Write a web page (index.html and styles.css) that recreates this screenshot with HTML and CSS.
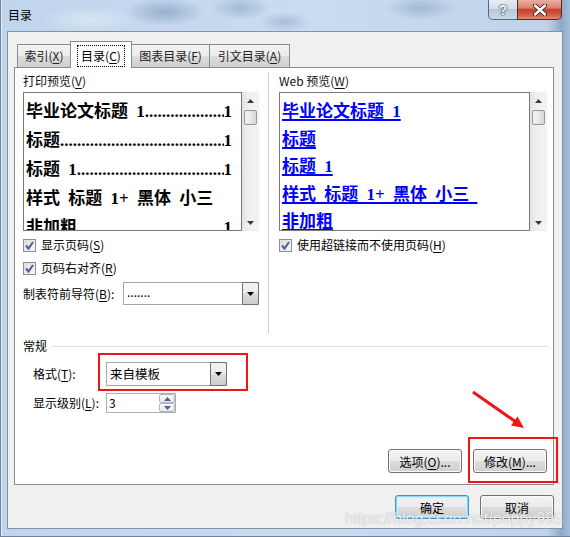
FILE: index.html
```html
<!DOCTYPE html>
<html lang="zh-CN">
<head>
    <meta charset="UTF-8">
    <meta name="viewport" content="width=device-width, initial-scale=1.0">
    <title>目录</title>
    <link rel="stylesheet" href="styles.css">
</head>
<body>
    <div class="window">
        <div class="titlebar">
            <span class="title">目录</span>
            <div class="caption-buttons">
                <span class="cap-btn help">?</span>
                <span class="cap-btn close">
                    <svg width="14" height="12" viewBox="0 0 14 12">
                        <path d="M2 1.5 L12 10.5 M12 1.5 L2 10.5" stroke="#3b1f1a" stroke-width="4.2" stroke-linecap="round"/>
                        <path d="M2 1.5 L12 10.5 M12 1.5 L2 10.5" stroke="#fff" stroke-width="2.4" stroke-linecap="round"/>
                    </svg>
                </span>
            </div>
        </div>

        <div class="client">
            <!-- abas do dialogo -->
            <div class="tabs">
                <div class="tab tab-index">索引(<u>X</u>)</div>
                <div class="tab tab-toc active"><span class="focus">目录(<u>C</u>)</span></div>
                <div class="tab tab-figures">图表目录(<u>F</u>)</div>
                <div class="tab tab-cites">引文目录(<u>A</u>)</div>
            </div>

            <div class="panel">
                <div class="columns">
                    <div class="col col-print">
                        <div class="caption">打印预览(<u>V</u>)</div>
                        <div class="preview">
                            <div class="preview-box print">
                                <div class="toc-line"><span class="entry">毕业论文标题 1</span><span class="leader">................................................................</span><span>1</span></div>
                                <div class="toc-line"><span class="entry">标题</span><span class="leader">................................................................</span><span>1</span></div>
                                <div class="toc-line"><span class="entry">标题 1</span><span class="leader">................................................................</span><span>1</span></div>
                                <div class="toc-line"><span class="entry">样式 标题 1+ 黑体 小三</span></div>
                                <div class="toc-line"><span class="entry">非加粗</span><span class="leader">................................................................</span><span>1</span></div>
                            </div>
                            <div class="scrollbar">
                                <div class="sb-arrow">
                                    <svg width="7" height="4" viewBox="0 0 7 4"><path d="M0 4 L3.5 0 L7 4 Z" fill="#3c3c3c"/></svg>
                                </div>
                                <div class="sb-thumb"></div>
                                <div class="sb-track"></div>
                                <div class="sb-arrow">
                                    <svg width="7" height="4" viewBox="0 0 7 4"><path d="M0 0 L7 0 L3.5 4 Z" fill="#3c3c3c"/></svg>
                                </div>
                            </div>
                        </div>
                        <div class="check"><span class="box"><svg width="11" height="11" viewBox="0 0 11 11"><path d="M2 5.5 L4.5 8.5 L9 2" fill="none" stroke="#4a5e9b" stroke-width="2"/></svg></span><span>显示页码(<u>S</u>)</span></div>
                        <div class="check"><span class="box"><svg width="11" height="11" viewBox="0 0 11 11"><path d="M2 5.5 L4.5 8.5 L9 2" fill="none" stroke="#4a5e9b" stroke-width="2"/></svg></span><span>页码右对齐(<u>R</u>)</span></div>
                        <div class="leader-row">
                            <span class="leader-label">制表符前导符(<u>B</u>):</span>
                            <div class="combo leader-combo">
                                <span class="combo-text">.......</span>
                                <span class="combo-drop"><svg width="7" height="4" viewBox="0 0 7 4"><path d="M0 0 L7 0 L3.5 4 Z" fill="#000"/></svg></span>
                            </div>
                        </div>
                    </div>

                    <div class="divider"></div>

                    <div class="col col-web">
                        <div class="caption">Web 预览(<u>W</u>)</div>
                        <div class="preview">
                            <div class="preview-box web">
                                <div class="web-line"><span>毕业论文标题 1</span></div>
                                <div class="web-line"><span>标题</span></div>
                                <div class="web-line"><span>标题 1</span></div>
                                <div class="web-line"><span>样式 标题 1+ 黑体 小三 </span></div>
                                <div class="web-line"><span>非加粗</span></div>
                            </div>
                            <div class="scrollbar">
                                <div class="sb-arrow">
                                    <svg width="7" height="4" viewBox="0 0 7 4"><path d="M0 4 L3.5 0 L7 4 Z" fill="#3c3c3c"/></svg>
                                </div>
                                <div class="sb-thumb"></div>
                                <div class="sb-track"></div>
                                <div class="sb-arrow">
                                    <svg width="7" height="4" viewBox="0 0 7 4"><path d="M0 0 L7 0 L3.5 4 Z" fill="#3c3c3c"/></svg>
                                </div>
                            </div>
                        </div>
                        <div class="check"><span class="box"><svg width="11" height="11" viewBox="0 0 11 11"><path d="M2 5.5 L4.5 8.5 L9 2" fill="none" stroke="#4a5e9b" stroke-width="2"/></svg></span><span>使用超链接而不使用页码(<u>H</u>)</span></div>
                    </div>
                </div>

                <div class="group-title"><span>常规</span><span class="rule"></span></div>

                <div class="field-row format-row">
                    <span class="field-label">格式(<u>T</u>):</span>
                    <div class="combo format-combo">
                        <span class="combo-text">来自模板</span>
                        <span class="combo-drop"><svg width="7" height="4" viewBox="0 0 7 4"><path d="M0 0 L7 0 L3.5 4 Z" fill="#000"/></svg></span>
                    </div>
                </div>

                <div class="field-row level-row">
                    <span class="field-label">显示级别(<u>L</u>):</span>
                    <div class="spin">
                        <span class="spin-text">3</span>
                        <span class="spin-buttons">
                            <span class="spin-btn"><svg width="7" height="4" viewBox="0 0 7 4"><path d="M0 4 L3.5 0 L7 4 Z" fill="#4f6289"/></svg></span>
                            <span class="spin-btn"><svg width="7" height="4" viewBox="0 0 7 4"><path d="M0 0 L7 0 L3.5 4 Z" fill="#4f6289"/></svg></span>
                        </span>
                    </div>
                </div>

                <div class="button-row panel-buttons">
                    <button class="btn">选项(<u>O</u>)...</button>
                    <button class="btn">修改(<u>M</u>)...</button>
                </div>
            </div>

            <div class="button-row dialog-buttons">
                <button class="btn default">确定</button>
                <button class="btn">取消</button>
            </div>
        </div>

        <!-- marcacoes em vermelho por cima do dialogo -->
        <div class="mark mark-format"></div>
        <div class="mark mark-modify"></div>
        <svg class="arrow" width="570" height="537" viewBox="0 0 570 537">
            <line x1="473" y1="392" x2="516" y2="422" stroke="#f01414" stroke-width="3"/>
            <polygon points="524,428 511,425.5 517.5,416.5" fill="#f01414"/>
        </svg>
        <div class="watermark">https://blog.csdn.net/poppy995</div>
    </div>
</body>
</html>
```

FILE: styles.css
```css
* {
    box-sizing: border-box;
}
body {
    margin: 0;
    font-family: "Noto Sans CJK SC", "Microsoft YaHei", sans-serif;
    font-size: 12px;
    line-height: 16px;
    color: #000;
    background-color: #c3d8ee;
    overflow: hidden;
}
u {
    text-decoration: underline;
    text-underline-offset: 2px;
}

/* moldura da janela (vidro aero) */
.window {
    position: relative;
    width: 570px;
    height: 537px;
    padding: 0 7px 8px 7px;
    display: flex;
    flex-direction: column;
    background:
        radial-gradient(ellipse 40px 14px at 165px 12px, rgba(95, 125, 165, 0.45), transparent),
        radial-gradient(ellipse 30px 12px at 240px 8px, rgba(95, 125, 165, 0.35), transparent),
        radial-gradient(ellipse 26px 10px at 285px 22px, rgba(95, 125, 165, 0.3), transparent),
        radial-gradient(ellipse 35px 12px at 420px 8px, rgba(95, 125, 165, 0.35), transparent),
        radial-gradient(ellipse 50px 14px at 90px 20px, rgba(255, 255, 255, 0.35), transparent),
        linear-gradient(90deg, #bfd5ec 0%, #c9dcf0 55%, #bed3ea 96%, #8ea9c9 98.5%, #a7bedb 100%);
    box-shadow: inset 1px 0 0 #6f839c, inset 0 -1px 0 #6f839c, inset 2px 0 0 rgba(255, 255, 255, 0.6);
}
.titlebar {
    height: 31px;
    display: flex;
    justify-content: space-between;
    align-items: flex-start;
}
.title {
    padding-top: 7px;
    margin-left: 1px;
}
.caption-buttons {
    display: flex;
    margin-right: 1px;
}
.cap-btn {
    height: 20px;
    display: flex;
    align-items: center;
    justify-content: center;
    border: 1px solid #56667b;
    border-top: none;
}
.help {
    width: 30px;
    border-radius: 0 0 0 5px;
    background: linear-gradient(#e6edf6, #d2dde9 45%, #b8c8da 50%, #c9d8e8);
    color: #fff;
    font-family: "Liberation Sans", sans-serif;
    font-weight: bold;
    font-size: 14px;
    text-shadow: 0 0 1px #2d3a4c, 0 0 1px #2d3a4c, 0 0 2px #2d3a4c;
}
.close {
    width: 45px;
    margin-left: -1px;
    border-color: #5a2a22;
    border-radius: 0 0 5px 0;
    background: linear-gradient(#eab0a2, #d9806c 42%, #c4432f 50%, #cf5a40 75%, #e28c70);
}

/* area cliente do dialogo */
.client {
    flex: 1;
    background-color: #f0f0f0;
    border: 1px solid #8393a7;
    padding: 9px 8px 9px 6px;
    display: flex;
    flex-direction: column;
}
.tabs {
    display: flex;
    align-items: flex-end;
    padding-left: 3px;
    height: 26px;
}
.tab {
    height: 23px;
    border: 1px solid #898c95;
    border-bottom: none;
    background: linear-gradient(#f3f3f3, #ebebeb 50%, #dddddd 50%, #cfcfcf);
    text-align: center;
    line-height: 21px;
    color: #222;
}
.tab + .tab {
    margin-left: -1px;
}
.tab-index { width: 54px; }
.tab-toc { width: 62px; }
.tab-figures { width: 79px; }
.tab-cites { width: 81px; }
.tab.active {
    position: relative;
    z-index: 1;
    height: 27px;
    margin-bottom: -1px;
    background: #fff;
    padding-top: 3px;
    color: #000;
}
.focus {
    display: inline-block;
    border: 1px dotted #000;
    padding: 1px 3px;
    line-height: 18px;
}

.panel {
    height: 418px;
    border: 1px solid #898c95;
    background-color: #fff;
    padding: 4px 6px 11px 8px;
    display: flex;
    flex-direction: column;
}
.columns {
    display: flex;
    height: 261px;
}
.col-print { width: 236px; }
.col-web { width: 268px; }
.divider {
    width: 1px;
    margin: 0 10px 0 9px;
    background-color: #c9cfd5;
}
.caption {
    margin-top: 1px;
    height: 16px;
    color: #111;
}

/* caixas de pre-visualizacao */
.preview {
    margin-top: 3px;
    height: 139px;
    display: flex;
}
.preview-box {
    flex: 1;
    border: 1px solid #7a7a7a;
    overflow: hidden;
    font-family: "Liberation Serif", "Noto Sans CJK SC", serif;
    font-weight: bold;
    font-size: 17px;
}
.print {
    padding: 4px 9px 0 2px;
}
.toc-line {
    display: flex;
    height: 29px;
    line-height: 29px;
}
.entry,
.web-line span {
    white-space: pre;
    word-spacing: 4px;
}
.leader {
    flex: 1;
    min-width: 0;
    overflow: hidden;
    white-space: nowrap;
}
.web {
    padding: 5px 2px 0 2px;
}
.web-line {
    height: 27.5px;
    line-height: 27.5px;
    white-space: nowrap;
}
.web-line span {
    color: #0000ff;
    text-decoration: underline;
    text-decoration-thickness: 2px;
    text-underline-offset: 2px;
}
.scrollbar {
    width: 17px;
    display: flex;
    flex-direction: column;
    background: linear-gradient(90deg, #e3e3e3, #f0f0f0 40%, #f3f3f3);
}
.sb-arrow {
    height: 17px;
    display: flex;
    align-items: center;
    justify-content: center;
}
.sb-thumb {
    margin: 1px 2px 0 2px;
    height: 15px;
    border: 1px solid #979797;
    border-radius: 2px;
    background: linear-gradient(90deg, #f4f4f4, #e8e8e8 50%, #d6d6d6);
}
.sb-track {
    flex: 1;
}

/* caixas de selecao */
.check {
    margin-top: 5px;
    height: 18px;
    display: flex;
    align-items: center;
    gap: 5px;
}
.box {
    width: 13px;
    height: 13px;
    border: 1px solid #8f8f8f;
    background: linear-gradient(135deg, #dcdcdc, #f6f6f6);
    display: flex;
    align-items: center;
    justify-content: center;
}
.box svg {
    display: block;
}

.leader-row {
    margin-top: 5px;
    height: 23px;
    display: flex;
    align-items: center;
}
.leader-label {
    width: 100px;
}

/* listas suspensas */
.combo {
    height: 100%;
    display: flex;
    border: 1px solid #a3a6ac;
    background-color: #fff;
}
.combo-text {
    flex: 1;
    padding-left: 3px;
    display: flex;
    align-items: center;
}
.combo-drop {
    width: 17px;
    margin: -1px -1px -1px 0;
    border: 1px solid #707070;
    border-radius: 0 2px 2px 0;
    background: linear-gradient(#f3f3f3, #ebebeb 50%, #dcdcdc 50%, #cdcdcd);
    display: flex;
    align-items: center;
    justify-content: center;
}
.leader-combo {
    width: 136px;
}
.leader-combo .combo-text {
    padding-bottom: 3px;
}

.group-title {
    margin-top: 5px;
    height: 16px;
    display: flex;
    align-items: center;
}
.rule {
    flex: 1;
    height: 1px;
    margin-left: 5px;
    background-color: #d5dfe5;
}

.field-row {
    display: flex;
    align-items: center;
    padding-left: 10px;
}
.field-label {
    width: 73px;
}
.format-row {
    margin-top: 8px;
    height: 24px;
}
.format-combo {
    width: 121px;
    font-size: 12.5px;
}
.level-row {
    margin-top: 7px;
    height: 20px;
}
.spin {
    width: 70px;
    height: 20px;
    display: flex;
    border: 1px solid #abadb3;
    background-color: #fff;
}
.spin-text {
    flex: 1;
    padding-left: 2px;
    line-height: 17px;
}
.spin-buttons {
    width: 16px;
    display: flex;
    flex-direction: column;
}
.spin-btn {
    flex: 1;
    border: 1px solid #b3b7bd;
    border-radius: 2px;
    background: linear-gradient(#f7f9fb, #e4e9ef);
    display: flex;
    align-items: center;
    justify-content: center;
}

/* botoes */
.button-row {
    display: flex;
    justify-content: flex-end;
    gap: 11px;
}
.panel-buttons {
    margin-top: auto;
}
.dialog-buttons {
    margin-top: 10px;
}
.btn {
    width: 74px;
    height: 24px;
    padding: 0;
    font-family: inherit;
    font-size: 12px;
    color: #000;
    border: 1px solid #707070;
    border-radius: 3px;
    background: linear-gradient(#f2f2f2, #ebebeb 50%, #dddddd 50%, #cfcfcf);
    box-shadow: inset 0 0 0 1px #fbfbfb;
}
.btn.default {
    border-color: #3c8fd0;
    box-shadow: inset 0 0 0 1px #8fd8f8, inset 0 0 0 2px #cdeefb;
}

/* marcacoes */
.mark {
    position: absolute;
    border: 2px solid #f01414;
}
.mark-format {
    left: 98px;
    top: 353px;
    width: 150px;
    height: 38px;
}
.mark-modify {
    left: 468px;
    top: 437px;
    width: 90px;
    height: 46px;
}
.arrow {
    position: absolute;
    left: 0;
    top: 0;
    pointer-events: none;
}
.watermark {
    position: absolute;
    left: 345px;
    top: 511px;
    font-family: "Liberation Sans", sans-serif;
    font-size: 16px;
    line-height: 16px;
    color: rgba(255, 255, 255, 0.85);
    text-shadow: 0 0 1px rgba(80, 80, 80, 0.55);
    white-space: nowrap;
}
```
